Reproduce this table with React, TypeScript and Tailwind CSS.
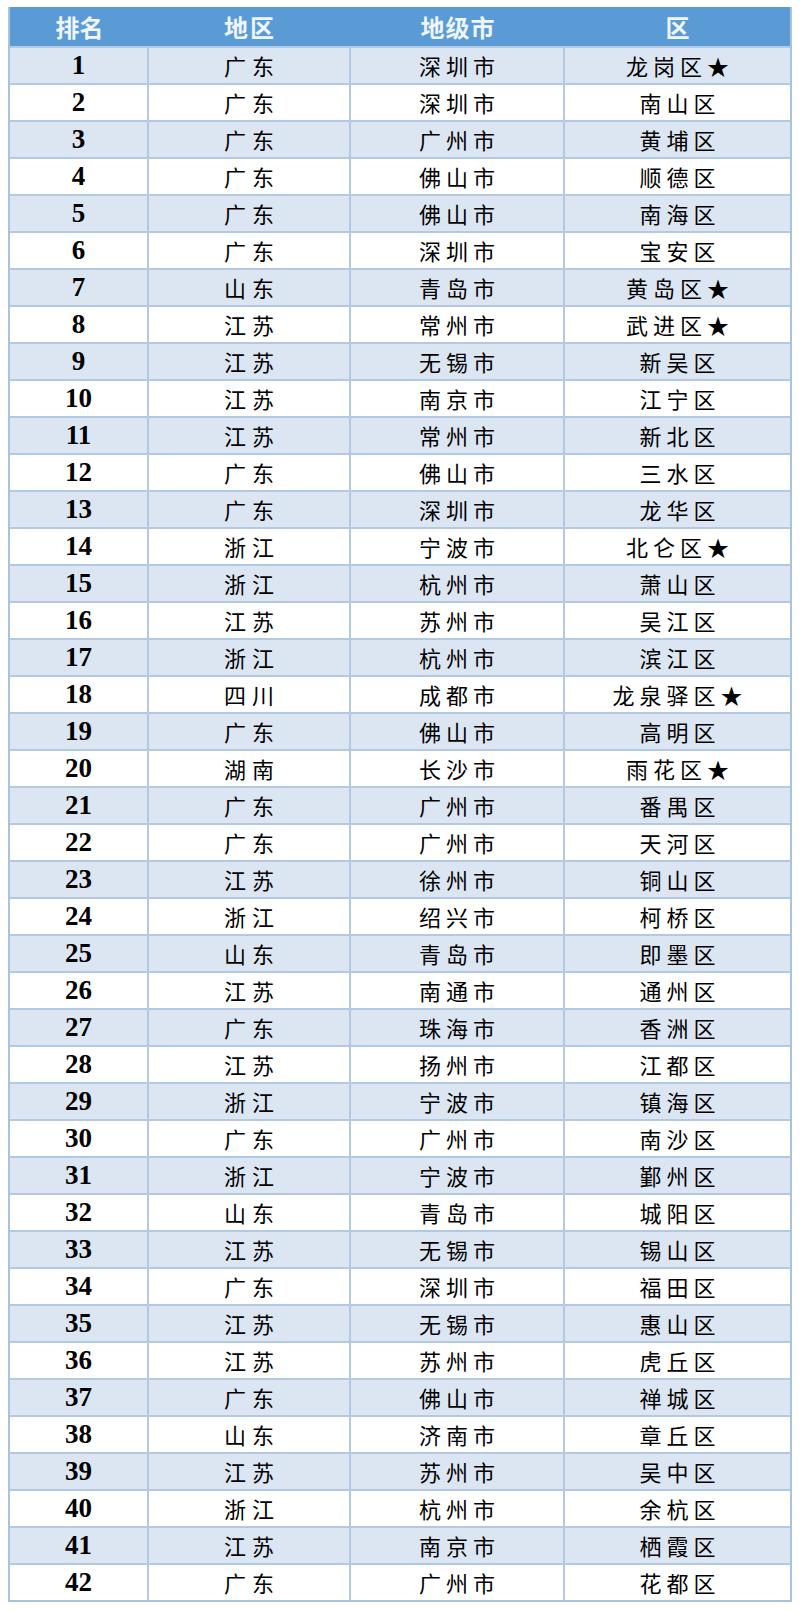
import React from "react";

const rows: [string, string, string][] = [
  ["广东", "深圳市", "龙岗区★"],
  ["广东", "深圳市", "南山区"],
  ["广东", "广州市", "黄埔区"],
  ["广东", "佛山市", "顺德区"],
  ["广东", "佛山市", "南海区"],
  ["广东", "深圳市", "宝安区"],
  ["山东", "青岛市", "黄岛区★"],
  ["江苏", "常州市", "武进区★"],
  ["江苏", "无锡市", "新吴区"],
  ["江苏", "南京市", "江宁区"],
  ["江苏", "常州市", "新北区"],
  ["广东", "佛山市", "三水区"],
  ["广东", "深圳市", "龙华区"],
  ["浙江", "宁波市", "北仑区★"],
  ["浙江", "杭州市", "萧山区"],
  ["江苏", "苏州市", "吴江区"],
  ["浙江", "杭州市", "滨江区"],
  ["四川", "成都市", "龙泉驿区★"],
  ["广东", "佛山市", "高明区"],
  ["湖南", "长沙市", "雨花区★"],
  ["广东", "广州市", "番禺区"],
  ["广东", "广州市", "天河区"],
  ["江苏", "徐州市", "铜山区"],
  ["浙江", "绍兴市", "柯桥区"],
  ["山东", "青岛市", "即墨区"],
  ["江苏", "南通市", "通州区"],
  ["广东", "珠海市", "香洲区"],
  ["江苏", "扬州市", "江都区"],
  ["浙江", "宁波市", "镇海区"],
  ["广东", "广州市", "南沙区"],
  ["浙江", "宁波市", "鄞州区"],
  ["山东", "青岛市", "城阳区"],
  ["江苏", "无锡市", "锡山区"],
  ["广东", "深圳市", "福田区"],
  ["江苏", "无锡市", "惠山区"],
  ["江苏", "苏州市", "虎丘区"],
  ["广东", "佛山市", "禅城区"],
  ["山东", "济南市", "章丘区"],
  ["江苏", "苏州市", "吴中区"],
  ["浙江", "杭州市", "余杭区"],
  ["江苏", "南京市", "栖霞区"],
  ["广东", "广州市", "花都区"],
];

const cjk = "font-['Noto_Sans_CJK_SC','Noto_Sans',sans-serif]";

export default function App() {
  return (
    <div className="w-[800px] h-[1610px] bg-white pt-[7px] pl-[8px]">
      <div className="w-[784px] border-x-2 border-b-2 border-[#a9c3df]">
        <div className={`grid grid-cols-[139px_202px_214px_225px] h-[39px] bg-[#5b9bd5] text-[#eef5fc] text-[24px] font-bold items-center text-center ${cjk}`}>
          <div>排名</div>
          <div className="tracking-[2px]">地区</div>
          <div className="tracking-[1px]">地级市</div>
          <div>区</div>
        </div>
        {rows.map((r, i) => (
          <div
            key={i}
            className={`grid grid-cols-[139px_202px_214px_225px] h-[37px] border-t-2 border-[#b3c9e2] text-black ${
              i % 2 === 0 ? "bg-[#dce6f2]" : "bg-white"
            }`}
          >
            <div className="flex items-center justify-center border-r-2 border-[#b3c9e2] font-['Liberation_Serif',serif] font-bold text-[27px] leading-none">
              {i + 1}
            </div>
            <div className={`flex items-center justify-center border-r-2 border-[#b3c9e2] text-[22px] tracking-[6px] pl-[6px] ${cjk}`}>
              {r[0]}
            </div>
            <div className={`flex items-center justify-center border-r-2 border-[#b3c9e2] text-[22px] tracking-[5px] pl-[5px] ${cjk}`}>
              {r[1]}
            </div>
            <div className={`flex items-center justify-center text-[22px] tracking-[5px] pl-[5px] ${cjk}`}>
              {r[2]}
            </div>
          </div>
        ))}
      </div>
    </div>
  );
}
